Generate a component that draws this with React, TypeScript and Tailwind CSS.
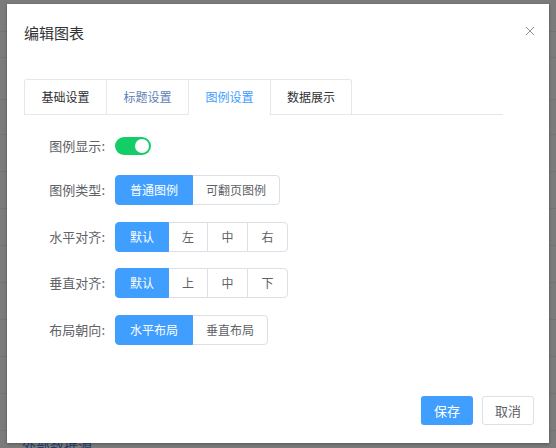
import React from 'react';

type Opt = { label: string; w: string };

const tabs = [
  { label: '基础设置', w: 'w-[81px]' },
  { label: '标题设置', w: 'w-[82px]' },
  { label: '图例设置', w: 'w-[82px]' },
  { label: '数据展示', w: 'w-[81px]' },
];

function RadioGroup({ options, active = 0 }: { options: Opt[]; active?: number }) {
  return (
    <div className="flex">
      {options.map((o, i) => {
        const on = i === active;
        return (
          <div
            key={o.label}
            className={
              'flex h-[30px] items-center justify-center border text-[12px] ' +
              o.w +
              (i > 0 ? ' -ml-px' : '') +
              (i === 0 ? ' rounded-l-[4px]' : '') +
              (i === options.length - 1 ? ' rounded-r-[4px]' : '') +
              (on
                ? ' relative z-10 border-[#409eff] bg-[#409eff] text-white'
                : ' border-[#dcdfe6] bg-white text-[#606266]')
            }
          >
            {o.label}
          </div>
        );
      })}
    </div>
  );
}

function Row({ label, children, className }: { label: string; children: React.ReactNode; className?: string }) {
  return (
    <div className={'flex h-[30px] items-center ' + (className ?? '')}>
      <div className="w-[91px] pr-[10px] text-right text-[13px] text-[#606266]">{label}:</div>
      {children}
    </div>
  );
}

export default function App() {
  const lines = [31, 57, 99, 134, 171, 208, 245, 282, 319, 356, 393, 430];
  return (
    <div
      className="relative h-[448px] w-[556px] overflow-hidden bg-[#7b7b7b]"
      style={{ fontFamily: '"Noto Sans CJK SC", "Noto Sans", sans-serif' }}
    >
      {lines.map((y) => (
        <div key={y} className="absolute left-0 h-px w-full bg-[#737373]" style={{ top: y }} />
      ))}
      <div className="absolute left-[22px] top-[437px] text-[14px] leading-[16px] text-[#1f3f70]">外部数据源</div>

      {/* dialog */}
      <div className="absolute left-[7px] top-[4px] flex h-[439px] w-[542px] flex-col bg-white shadow-[0_1px_3px_rgba(0,0,0,0.3)]">
        <div className="relative px-[17px] pt-[19px]">
          <div className="text-[15px] leading-[20px] text-[#303133]">编辑图表</div>
          <svg className="absolute right-[14px] top-[22px]" width="10" height="10" viewBox="0 0 10 10">
            <path d="M1 1L9 9M9 1L1 9" stroke="#909399" strokeWidth="1" />
          </svg>
        </div>

        <div className="ml-[17px] mr-[46px] mt-[36px] flex border-b border-[#e4e7ed]">
          <div className="-mb-px flex rounded-t-[3px] border border-b-0 border-[#e4e7ed]">
            {tabs.map((t, i) => (
              <div
                key={t.label}
                className={
                  'flex h-[35px] items-center justify-center text-[12px] ' +
                  t.w +
                  (i > 0 ? ' border-l border-[#e4e7ed]' : '') +
                  (i === 2
                    ? ' border-b border-b-white bg-white text-[#409eff]'
                    : i === 1
                      ? ' border-b border-b-[#e4e7ed] text-[#5d7fb5]'
                      : ' border-b border-b-[#e4e7ed] text-[#303133]')
                }
              >
                {t.label}
              </div>
            ))}
          </div>
        </div>

        <div className="flex flex-col pl-[17px]">
          <Row label="图例显示" className="mt-[16px]">
            <div className="flex h-[18px] w-[36px] items-center justify-end rounded-full bg-[#13ce66] pr-[2px]">
              <div className="h-[14px] w-[14px] rounded-full bg-white" />
            </div>
          </Row>
          <Row label="图例类型" className="mt-[14px]">
            <RadioGroup
              options={[
                { label: '普通图例', w: 'w-[78px]' },
                { label: '可翻页图例', w: 'w-[88px]' },
              ]}
            />
          </Row>
          <Row label="水平对齐" className="mt-[17px]">
            <RadioGroup
              options={[
                { label: '默认', w: 'w-[54px]' },
                { label: '左', w: 'w-[40px]' },
                { label: '中', w: 'w-[41px]' },
                { label: '右', w: 'w-[41px]' },
              ]}
            />
          </Row>
          <Row label="垂直对齐" className="mt-[16px]">
            <RadioGroup
              options={[
                { label: '默认', w: 'w-[54px]' },
                { label: '上', w: 'w-[40px]' },
                { label: '中', w: 'w-[41px]' },
                { label: '下', w: 'w-[41px]' },
              ]}
            />
          </Row>
          <Row label="布局朝向" className="mt-[17px]">
            <RadioGroup
              options={[
                { label: '水平布局', w: 'w-[78px]' },
                { label: '垂直布局', w: 'w-[76px]' },
              ]}
            />
          </Row>
        </div>

        <div className="mt-auto flex justify-end gap-[9px] pb-[18px] pr-[15px]">
          <div className="flex h-[29px] w-[52px] items-center justify-center rounded-[3px] bg-[#409eff] text-[13px] text-white">
            保存
          </div>
          <div className="flex h-[29px] w-[52px] items-center justify-center rounded-[3px] border border-[#dcdfe6] bg-white text-[13px] text-[#606266]">
            取消
          </div>
        </div>
      </div>
    </div>
  );
}
